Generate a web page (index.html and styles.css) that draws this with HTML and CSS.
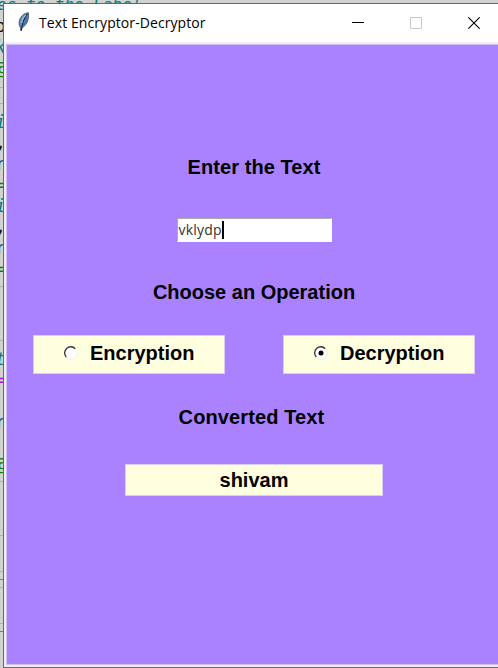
FILE: index.html
```html
<!DOCTYPE html>
<html lang="en">
<head>
<meta charset="utf-8">
<title>Text Encryptor-Decryptor</title>
<link rel="stylesheet" href="styles.css">
</head>
<body>
<div class="editor" aria-hidden="true">
  <div class="cell first">
    <p class="comment">es to the Label</p>
    <p class="dark">o</p>
    <p class="comment">k</p>
    <p class="green">@</p>
  </div>
  <div class="cell second">
    <p class="comment">i</p>
    <p class="dark">,</p>
    <p class="blue">r</p>
    <p class="green">=</p>
    <p class="comment">i</p>
    <p class="dark">,</p>
    <p class="blue">r</p>
    <p class="green">=</p>
  </div>
  <div class="cell third">
    <p class="comment">t</p>
    <p class="purple">=</p>
    <p></p>
    <p class="blue">r</p>
    <p></p>
    <p class="green">@</p>
  </div>
  <div class="cell output"></div>
  <div class="cell tall"></div>
  <div class="cell slim dark-edge"></div>
  <div class="cell slim"></div>
  <div class="cell tall"></div>
  <div class="cell slim dark-edge"></div>
</div>
<main class="window">
  <header class="titlebar">
    <svg class="feather" viewBox="0 0 12 20" width="12" height="20">
      <path d="M10.500.8C7 .8 3 3.500 1.600 8c-.8 3-.7 5.500.8 7.500L3 19l1-3.300C8 14 11.300 8 10.500.8z" fill="#6289b8" stroke="#59616b" stroke-width="1"/>
      <path d="M9.600 2C6.500 5 4.600 9.500 3.300 18.500" fill="none" stroke="#202933" stroke-width="1.100"/>
      <path d="M8 3.300C5.500 5 4 8 3.600 11" fill="none" stroke="#9dc0e6" stroke-width="1.200"/>
      <path d="M9 5.500C8.500 9 7 12 5 14" fill="none" stroke="#3472b6" stroke-width="1.600"/>
    </svg>
    <h1>Text Encryptor-Decryptor</h1>
    <svg class="control" viewBox="0 0 12 12" width="12" height="12"><path d="M0 5.500h12" stroke="#000"/></svg>
    <svg class="control" viewBox="0 0 12 12" width="12" height="12"><path d="M.5.500h11v11H.5z" fill="none" stroke="#c8c8c8"/></svg>
    <svg class="control" viewBox="0 0 12 12" width="12" height="12"><path d="M.3.300l11.400 11.400M11.700.300L.3 11.700" stroke="#000" stroke-width="1.100"/></svg>
  </header>
  <section class="form">
    <h2 class="enter">Enter the Text</h2>
    <div class="entry"><span>vklydp</span><i class="caret"></i></div>
    <h2 class="choose">Choose an Operation</h2>
    <div class="options">
      <div class="option">
        <svg class="radio" viewBox="0 0 14 14" width="14" height="14">
          <circle cx="7" cy="7" r="6.400" fill="#fff" stroke="#eeeedd" stroke-width=".8"/>
          <path d="M2.300 11A6 6 0 0 1 11.200 2.700" fill="none" stroke="#333" stroke-width="1.300"/>
        </svg>
        <span>Encryption</span>
      </div>
      <div class="option">
        <svg class="radio" viewBox="0 0 14 14" width="14" height="14">
          <circle cx="7" cy="7" r="6.400" fill="#fff" stroke="#eeeedd" stroke-width=".8"/>
          <path d="M2.300 11A6 6 0 0 1 11.200 2.700" fill="none" stroke="#333" stroke-width="1.300"/>
          <circle cx="7" cy="7" r="2.500" fill="#000"/>
        </svg>
        <span>Decryption</span>
      </div>
    </div>
    <h2 class="converted">Converted Text</h2>
    <div class="result">shivam</div>
  </section>
</main>
</body>
</html>
```
FILE: styles.css
```css
* { box-sizing: border-box; margin: 0; padding: 0; }

body {
  position: relative;
  width: 498px;
  height: 668px;
  overflow: hidden;
  background: #d2d2d0;
}

.editor {
  height: 668px;
  overflow: hidden;
  font: 18px/21px "DejaVu Sans Mono", monospace;
}

.cell { border-bottom: 1px solid #b0b0b0; overflow: hidden; }
.cell p { height: 21px; white-space: pre; text-indent: -5px; }
.first { height: 88px; }
.cell.first p:first-child {
  margin-top: -6px;
  font-size: 16px;
  text-indent: -3px;
}
.second {
  height: 184px;
  margin-top: 15px;
  padding-top: 7px;
  border-top: 1px solid #b0b0b0;
}
.third {
  height: 142px;
  margin-top: 53px;
  padding-top: 7px;
  border-top: 1px solid #b0b0b0;
}
.output { height: 54px; }
.tall { height: 36px; }
.slim { height: 8px; }
.dark-edge { border-color: #777; }

.comment { color: #0b7a80; font-style: italic; }
.dark { color: #111; }
.green { color: #078013; }
.blue { color: #08478d; }
.purple { color: #a318d8; }

.window {
  position: absolute;
  left: 3px;
  top: 3px;
  width: 499px;
  height: 665px;
  border: 1px solid #666;
  background: #f0edf5;
}

.titlebar {
  display: flex;
  align-items: center;
  height: 38px;
  padding: 0 21px 0 14px;
  background: #fff;
}

.feather { margin-top: -2px; }

h1 {
  flex: 1;
  margin-left: 9px;
  font: 14px/20px "Open Sans", sans-serif;
  letter-spacing: 0.08px;
  white-space: nowrap;
  color: #000;
}

.control + .control { margin-left: 46px; }

.form {
  display: flex;
  flex-direction: column;
  align-items: center;
  width: 496px;
  height: 621px;
  margin: 2px 0 0 2px;
  padding-top: 110px;
  border: 1px solid #d0bdf5;
  background: #aa82ff;
  font: bold 20px/24px "Liberation Sans", Arial, sans-serif;
  color: #000;
}

h2 { font: inherit; }
.enter { letter-spacing: 0.08px; }
.converted { padding-right: 5px; letter-spacing: 0.12px; }

.entry {
  display: flex;
  align-items: center;
  width: 155px;
  height: 24px;
  margin: 39px 0 38px;
  border: 1px solid #fff;
  border-top-color: #aaa;
  border-left-color: #b0a6c6;
  background: #fff;
  font: 14px/20px "Open Sans", sans-serif;
  letter-spacing: 0.2px;
  color: #333;
}

.entry span { padding-left: 1px; }
.caret { width: 2px; height: 18px; background: #000; }

.options {
  display: flex;
  gap: 58px;
  margin: 31px 0;
}

.option {
  display: flex;
  align-items: center;
  width: 192px;
  height: 39px;
  padding: 0 0 3px 30px;
  border: 1px solid #dccdf0;
  background: #ffffe0;
}

.option span { margin-left: 12px; }

.result {
  width: 258px;
  height: 32px;
  margin-top: 35px;
  border: 1px solid #dccdf0;
  background: #ffffe0;
  line-height: 31px;
  text-align: center;
}
```
